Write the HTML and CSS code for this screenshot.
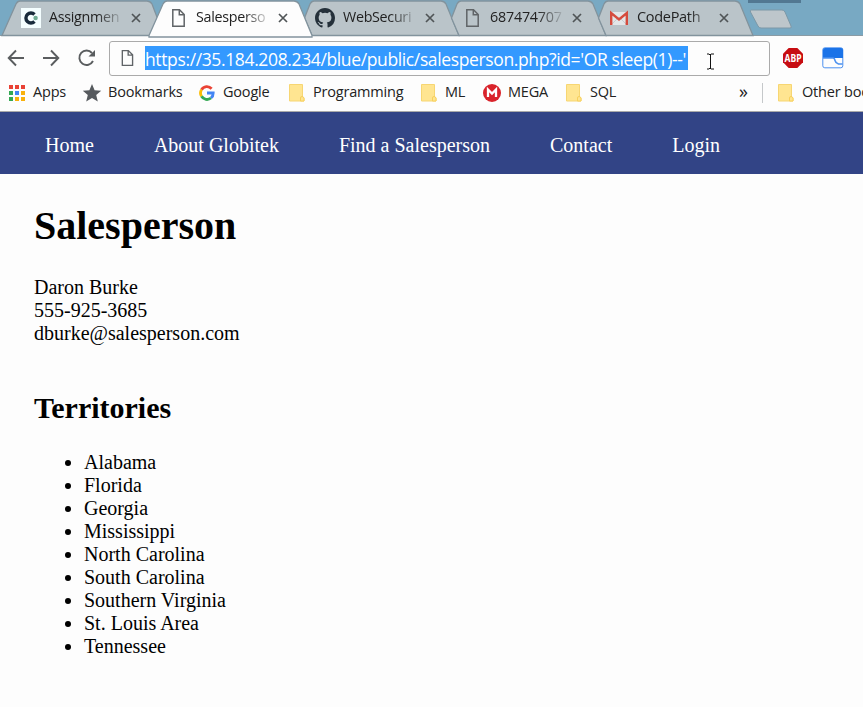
FILE: index.html
```html
<!DOCTYPE html>
<html lang="en">
<head>
<meta charset="utf-8">
<title>Salesperson</title>
<link rel="stylesheet" href="styles.css">
</head>
<body>
<svg class="defs" width="0" height="0">
  <symbol id="close" viewBox="0 0 12 12"><path d="M2 2l8 8M10 2l-8 8" fill="none" stroke="#505557" stroke-width="1.7"/></symbol>
  <symbol id="page" viewBox="0 0 20 20"><path d="M4.8 1.8h6.7l4.7 4.7v11.7H4.8zM11.3 2v4.8H16" fill="none" stroke="#606467" stroke-width="1.5"/></symbol>
  <symbol id="folder" viewBox="0 0 18 20"><path d="M1.5 1.500h13V14l1.500 1.200V18H1.500z" fill="#ffe591" stroke="#f7d673"/><path d="M12.500 18v-3q0-1.500 1.500-1.500t2 1.500v3z" fill="#ffe591" stroke="#f7d05c"/></symbol>
</svg>
<header class="browser">
  <div class="tabs">
    <div class="tab">
      <svg class="shape" width="168" height="36"><path d="M0 35.500L14 4Q15.500 1 18 1H145Q148 1 150 4L162 35.500z"/></svg>
      <div class="label"><svg width="20" height="20"><path d="M0 0h20v20H0z" fill="#f4feff"/><path d="M13.500 6.500A5 5 0 1 0 13.500 13.500" fill="none" stroke="#172a3b" stroke-width="3.400"/><circle cx="14.600" cy="10" r="2.200" fill="#6eac94"/></svg><span class="title">Assignmen</span><svg class="x" width="12" height="12"><use href="#close"/></svg></div>
    </div>
    <div class="tab active">
      <svg class="shape" width="168" height="36"><path d="M0 35.500L14 4Q15.500 1 18 1H145Q148 1 150 4L163 35.500V37H0z"/></svg>
      <div class="label"><svg width="20" height="20"><use href="#page"/></svg><span class="title">Salesperso</span><svg class="x" width="12" height="12"><use href="#close"/></svg></div>
    </div>
    <div class="tab">
      <svg class="shape" width="168" height="36"><path d="M16 35.500L8.500 18L14 4Q15.500 1 18 1H145Q148 1 150 4L163 35.500z"/></svg>
      <div class="label"><svg width="20" height="20" viewBox="0 0 16 16"><path fill="#24303a" d="M8 0C3.580 0 0 3.580 0 8c0 3.540 2.290 6.530 5.470 7.590.4.070.55-.17.55-.38v-1.490c-2.010.37-2.530-.49-2.690-.94-.09-.23-.48-.94-.82-1.130-.28-.15-.68-.52-.01-.53.630-.01 1.080.58 1.230.82.720 1.210 1.870.87 2.330.66.070-.52.280-.87.510-1.070-1.780-.2-3.640-.89-3.640-3.950 0-.87.310-1.590.82-2.150-.08-.2-.36-1.020.08-2.120 0 0 .67-.21 2.200.82a7.600 7.600 0 0 1 4 0c1.530-1.040 2.200-.82 2.200-.82.440 1.100.16 1.920.08 2.120.510.56.82 1.270.82 2.150 0 3.070-1.870 3.750-3.650 3.950.290.25.540.73.540 1.480v2.200c0 .21.150.46.550.38A8 8 0 0 0 16 8c0-4.420-3.580-8-8-8z"/></svg><span class="title">WebSecuri</span><svg class="x" width="12" height="12"><use href="#close"/></svg></div>
    </div>
    <div class="tab">
      <svg class="shape" width="168" height="36"><path d="M16 35.500L8.500 18L14 4Q15.500 1 18 1H145Q148 1 150 4L163 35.500z"/></svg>
      <div class="label"><svg width="20" height="20"><use href="#page"/></svg><span class="title digits">687474707</span><svg class="x" width="12" height="12"><use href="#close"/></svg></div>
    </div>
    <div class="tab">
      <svg class="shape" width="168" height="36"><path d="M16 35.500L8.500 18L14 4Q15.500 1 18 1H145Q148 1 150 4L163 35.500z"/></svg>
      <div class="label"><svg width="20" height="20"><path d="M2 4h16v13H2z" fill="#e3e6e8"/><path d="M3 16l6-6 2 0 6 6" fill="none" stroke="#c7cdd0"/><path d="M2.200 17V5l7.800 6.500L17.800 5v12" fill="none" stroke="#d54b3d" stroke-width="2.400"/></svg><span class="title last">CodePath</span><svg class="x" width="12" height="12"><use href="#close"/></svg></div>
    </div>
    <svg class="newtab" width="44" height="21"><path d="M2 1h31q2 0 3 2l6 14q1 2-1 2H12q-2 0-3-2L1.500 3Q1 1 2 1z" fill="#bdc6cb" stroke="#7c98a7"/></svg>
    <div class="grip"></div>
  </div>
  <div class="toolbar">
    <svg class="nav" width="100" height="36" fill="none" stroke="#5a5d5f" stroke-width="1.900"><path d="M24 18H9M16 10.500L8.700 18L16 25.500M43 18h15M51 10.500L58.300 18L51 25.500"/><path d="M93 21A7.200 7.200 0 1 1 92 13"/><path d="M95 10v6.500h-6.500z" fill="#5a5d5f" stroke="none"/></svg>
    <div class="omnibox"><svg width="18" height="18" viewBox="0 0 20 20"><use href="#page"/></svg><span class="url">https://35.184.208.234/blue/public/salesperson.php?id='OR sleep(1)--'</span><svg class="caret" width="9" height="17"><path d="M1 1h2l1 1 1-1h3M4.500 1v15M1 16h2l1-1 1 1h3" stroke="#111" fill="none"/></svg></div>
    <svg class="abp" width="22" height="22"><path d="M6.700 1h8.600L21 6.700v8.600L15.300 21H6.700L1 15.300V6.700z" fill="#c70d12"/><text x="11" y="14.600" text-anchor="middle" textLength="17" lengthAdjust="spacingAndGlyphs">ABP</text></svg>
    <svg class="ext" width="22" height="22"><rect x=".8" y=".8" width="20" height="20" rx="2" fill="#fdfdfd" stroke="#4c91ef"/><path d="M1 3q0-2 2-2h16q2 0 2 2v8H1z" fill="#1b73e8"/><path d="M1 11h10q1.500 0 2 2.500t3.500 3.500h4" fill="none" stroke="#4c91ef" stroke-width="1.500"/></svg>
  </div>
  <div class="bookmarks">
    <div class="bm apps"><svg width="18" height="18"><path d="M1 1h4v4H1zM7 1h4v4H7zM13 1h4v4h-4z" fill="#e94235"/><path d="M1 7h4v4H1zM1 13h4v4H1zM7 13h4v4H7z" fill="#34a853"/><path d="M7 7h4v4H7z" fill="#4285f4"/><path d="M13 7h4v4h-4zM7 13h4v4H7zM13 13h4v4h-4z" fill="#f9b10c"/></svg><span>Apps</span></div>
    <div class="bm marks"><svg width="20" height="20"><path d="M10 1l2.600 6.300 6.600.5-5 4.300 1.600 6.500-5.800-3.500-5.800 3.500 1.600-6.500-5-4.300 6.600-.5z" fill="#565a5e"/></svg><span>Bookmarks</span></div>
    <div class="bm google"><svg width="16" height="16" viewBox="0 0 16 16" fill="none" stroke-width="2.800"><path d="M2.500 4.700A6.300 6.300 0 0 1 12.600 3.700" stroke="#ea4335"/><path d="M2.500 4.700a6.300 6.300 0 0 0 0 6.600" stroke="#fbbc05"/><path d="M2.500 11.300A6.300 6.300 0 0 0 12 13" stroke="#34a853"/><path d="M12 13Q14.200 11.300 14.200 8H8" stroke="#4285f4"/></svg><span>Google</span></div>
    <div class="bm prog"><svg width="18" height="20"><use href="#folder"/></svg><span>Programming</span></div>
    <div class="bm ml"><svg width="18" height="20"><use href="#folder"/></svg><span>ML</span></div>
    <div class="bm mega"><svg width="18" height="18"><circle cx="9" cy="9" r="9" fill="#d9232b"/><path d="M5 13V5.500l4 4 4-4V13" fill="none" stroke="#fff" stroke-width="2.300"/></svg><span>MEGA</span></div>
    <div class="bm sql"><svg width="18" height="20"><use href="#folder"/></svg><span>SQL</span></div>
    <span class="more">»</span>
    <div class="bm other"><svg width="18" height="20"><use href="#folder"/></svg><span>Other bookmarks</span></div>
  </div>
</header>
<nav class="menu"><a>Home</a><a>About Globitek</a><a>Find a Salesperson</a><a>Contact</a><a>Login</a></nav>
<main>
  <h1>Salesperson</h1>
  <p>Daron Burke<br>555-925-3685<br>dburke@salesperson.com</p>
  <h2>Territories</h2>
  <ul>
    <li>Alabama</li><li>Florida</li><li>Georgia</li><li>Mississippi</li><li>North Carolina</li><li>South Carolina</li><li>Southern Virginia</li><li>St. Louis Area</li><li>Tennessee</li>
  </ul>
</main>
</body>
</html>
```
FILE: styles.css
```css
* { box-sizing: border-box; }
body { margin: 0; height: 707px; overflow: hidden; background: #fdfdfd; color: #000; font: 20px/23px "Liberation Serif", serif; }
svg { display: block; flex: none; }
.defs { position: absolute; }
.browser { font: 14.500px/20px "Open Sans", sans-serif; color: #222; letter-spacing: -0.200px; }

.tabs { position: relative; display: flex; height: 36px; padding-left: 2px; background: #78a9c3; border-bottom: 1px solid #8b9ba4; }
.tab { display: grid; width: 147px; height: 36px; flex: none; }
.tab > * { grid-area: 1 / 1; }
.shape { overflow: visible; fill: #bac4c9; stroke: #82939d; stroke-width: 1.300; }
.active { z-index: 1; }
.active .shape { fill: #fdfdfd; }
.label { z-index: 1; display: flex; align-items: center; height: 35px; padding-left: 19px; }
.title { width: 73px; margin: 0 8px 2px 8px; font-size: 14.300px; letter-spacing: -0.300px; white-space: nowrap; -webkit-mask-image: linear-gradient(90deg, #000 65%, rgba(0,0,0,.1)); mask-image: linear-gradient(90deg, #000 65%, rgba(0,0,0,.1)); }
.digits { letter-spacing: -0.200px; }
.last { font-size: 14.500px; -webkit-mask-image: linear-gradient(90deg, #000 70%, rgba(0,0,0,.3)); mask-image: linear-gradient(90deg, #000 70%, rgba(0,0,0,.3)); }
.newtab { margin: 9px 0 0 12px; }
.grip { position: absolute; left: 748px; top: 0; width: 53px; height: 3px; background: #527892; }

.toolbar { display: flex; align-items: center; height: 41px; padding-top: 3px; }
.nav { margin-right: 9px; }
.omnibox { display: flex; align-items: center; width: 661px; height: 35px; border: 1px solid #aaa; border-radius: 3px; padding-left: 8px; }
.url { width: 543px; height: 24px; margin-left: 9px; background: #3399ff; color: #fff; font-size: 17.500px; line-height: 26px; letter-spacing: -0.370px; white-space: nowrap; }
.caret { margin: 7px 0 0 18px; }
.abp { margin-left: 12px; }
.abp text { fill: #fff; font: bold 10px "Open Sans", sans-serif; letter-spacing: 0; }
.ext { margin-left: 18px; }

.bookmarks { display: flex; height: 35px; padding-left: 8px; border-bottom: 1px solid #aaa; overflow: hidden; }
.bm { display: flex; align-items: center; flex: none; gap: 8px; white-space: nowrap; height: 32px; }
.bm span { margin-bottom: 2px; }
.apps { width: 74px; gap: 7px; }
.marks { width: 117px; gap: 6px; }
.google { width: 89px; }
.prog { width: 132px; gap: 7px; }
.ml { width: 63px; gap: 7px; }
.mega { width: 82px; gap: 7px; }
.sql { width: 174px; gap: 7px; }
.more { width: 23px; font-size: 18px; line-height: 28px; }
.other { height: 20px; margin-top: 6px; padding-left: 14px; border-left: 1px solid #c5c8ca; gap: 7px; }
.bookmarks .more { flex: none; }

.menu { display: flex; gap: 60px; height: 62px; padding: 22px 0 0 45px; background: #324486; color: #fff; }
main { padding: 0 34px; }
h1 { margin: 29px 0 0; font-size: 40px; line-height: 46px; }
p { margin: 27px 0 0; }
h2 { margin: 46px 0 0; font-size: 30px; line-height: 34px; }
ul { margin: 26px 0 0; padding-left: 50px; }
```
